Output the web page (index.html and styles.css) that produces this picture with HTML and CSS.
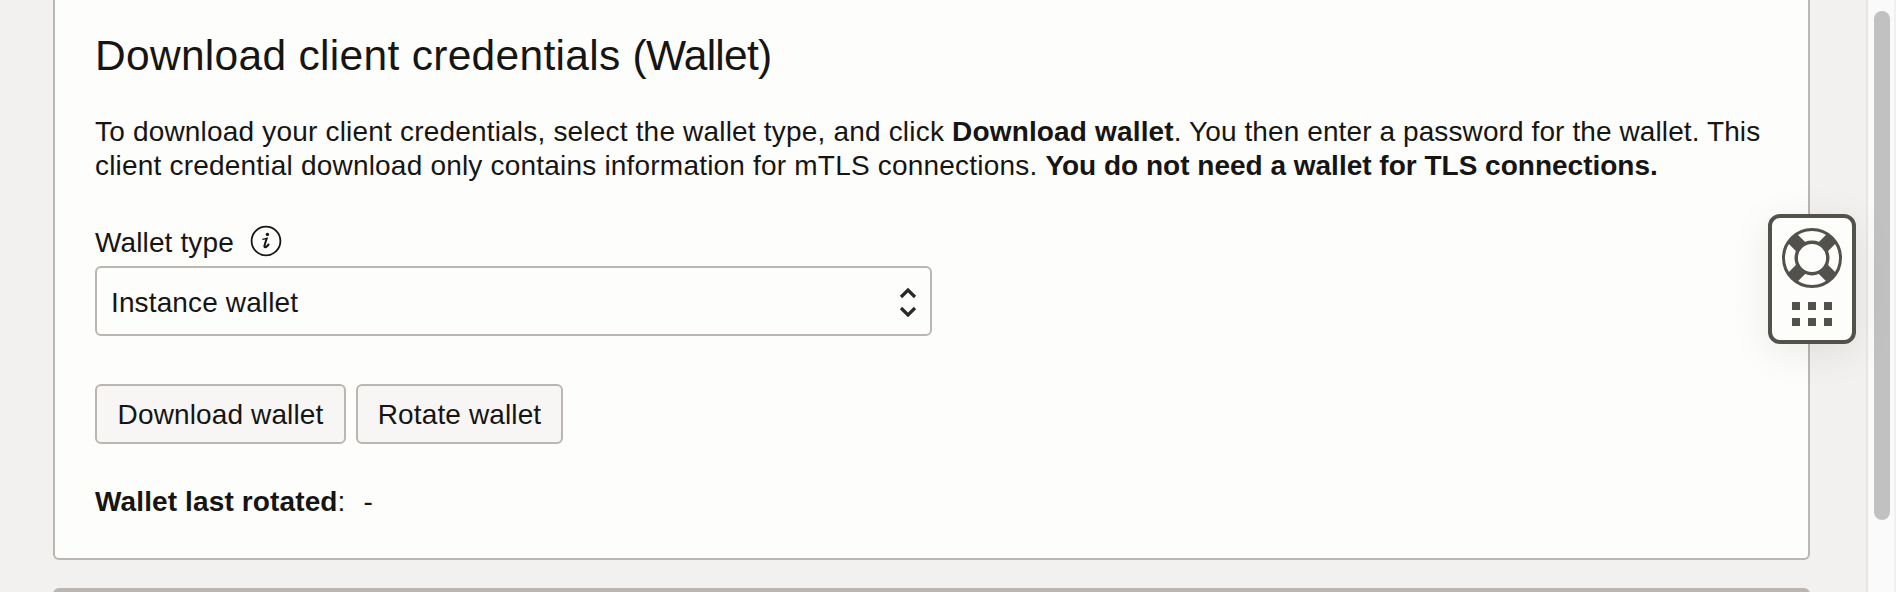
FILE: index.html
```html
<!DOCTYPE html>
<html lang="en">
<head>
<meta charset="utf-8">
<title>Database connection</title>
<link rel="stylesheet" href="styles.css">
</head>
<body>
<div class="page">
  <main class="content">
    <section class="card">
      <h2 class="title"><span class="t1">Download client credentials </span><span class="t2">(Wallet)</span></h2>
      <p class="intro"><span class="l1">To download your client credentials, select the wallet type, and click </span><b class="b1">Download wallet</b><span class="l2">. You then enter a password for the wallet. This</span><br><span class="l3">client credential download only contains information for mTLS connections. </span><b>You do not need a wallet for TLS connections.</b></p>
      <div class="field">
        <div class="label"><span class="lt">Wallet type</span>
          <svg class="info" viewBox="0 0 32 32"><circle cx="16" cy="16" r="14.4" fill="none" stroke="#161513" stroke-width="1.8"/><circle cx="17.4" cy="9.4" r="1.7" fill="#161513"/><path d="M12.3 14.4Q15 14 17.8 12.9" fill="none" stroke="#161513" stroke-width="1.3"/><path d="M16.7 13.2L14.5 20.4Q14 22.6 15.8 22Q17.6 21.1 19 18.9" fill="none" stroke="#161513" stroke-width="2"/></svg>
        </div>
        <div class="select"><span class="st">Instance wallet</span>
          <svg class="arrows" viewBox="0 0 18 30"><path d="M2 10L9 3L16 10M2 21L9 28L16 21" fill="none" stroke="#2b2a28" stroke-width="3.2"/></svg>
        </div>
      </div>
      <div class="actions">
        <button class="btn download"><span>Download wallet</span></button>
        <button class="btn rotate"><span>Rotate wallet</span></button>
      </div>
      <div class="rotated"><b>Wallet last rotated</b><span>:</span><span class="value">-</span></div>
    </section>
    <section class="next"></section>
  </main>
  <div class="track"><div class="thumb"></div></div>
  <aside class="help">
    <svg class="ring" viewBox="0 0 60 60">
      <path d="M10.5 10.5L22 22M49.5 10.5L38 22M10.5 49.5L22 38M49.5 49.5L38 38" stroke="#53514c" stroke-width="13" fill="none"/>
      <circle cx="30" cy="30" r="28.5" fill="none" stroke="#53514c" stroke-width="3"/>
      <circle cx="30" cy="30" r="15.8" fill="#fdfdfb" stroke="#53514c" stroke-width="3.4"/>
    </svg>
    <div class="dots"><i></i><i></i><i></i><i></i><i></i><i></i></div>
  </aside>
</div>
</body>
</html>
```
FILE: styles.css
```css
* { box-sizing: border-box; }
body { margin: 0; overflow: hidden; color: #161513; font: 28px/34px "Liberation Sans", Arial, sans-serif; background: #f3f1f0; }
.page { position: relative; display: flex; height: 592px; overflow: hidden; }
.content { width: 1866px; padding: 0 56px 0 53px; display: flex; flex-direction: column; gap: 28px; }
.card { width: 1757px; height: 560px; flex: none; padding: 31px 40px 0; border: 2px solid #bbb6b1; border-top: 0; border-radius: 0 0 6px 6px; background: #fdfdfb; }
.next { width: 1757px; height: 20px; flex: none; border-radius: 6px 6px 0 0; background: #bbb6b1; }
.title { margin: 0 0 34px; height: 50px; font-size: 42.5px; line-height: 50px; font-weight: 400; white-space: nowrap; }
.t1 { letter-spacing: .3px; }
.t2 { letter-spacing: -.75px; }
.intro { margin: 0; white-space: nowrap; }
.l1 { letter-spacing: .19px; }
.b1 { letter-spacing: .16px; }
.l2 { letter-spacing: .1px; }
.l3 { letter-spacing: .2px; }
.lt, .st, .rotated b, .btn { letter-spacing: .13px; }
.label { display: flex; align-items: center; height: 38px; margin-top: 41px; gap: 16px; }
.info { width: 32px; height: 32px; margin-top: -5px; }
.select { display: flex; align-items: center; justify-content: space-between; width: 837px; height: 70px; margin-top: 4px; padding: 2px 13px 0 14px; border: 2px solid #bbb6b1; border-radius: 6px; }
.st { padding-top: 2px; }
.arrows { width: 18px; height: 30px; }
.actions { display: flex; gap: 10px; margin-top: 48px; }
.btn { height: 60px; padding: 2px 0 0; border: 2px solid #bbb6b1; border-radius: 6px; background: #f7f6f5; color: inherit; font: inherit; letter-spacing: .13px; white-space: nowrap; }
.download { width: 251px; }
.rotate { width: 207px; }
.rotated { display: flex; margin-top: 41px; }
.value { margin-left: 18px; }
.track { width: 30px; flex: none; padding: 11px 0 0 6px; border-left: 2px solid #e7e7e7; border-right: 2px solid #f0f0f0; background: #fafafa; }
.thumb { width: 16px; height: 509px; border-radius: 8px; background: #c1c1c1; }
.help { position: absolute; left: 1768px; top: 214px; width: 88px; height: 130px; padding-top: 10px; border: 4px solid #53514c; border-radius: 12px; background: #fdfdfb; box-shadow: 0 8px 40px rgba(0,0,0,.08); display: flex; flex-direction: column; align-items: center; }
.ring { width: 60px; height: 60px; }
.dots { display: grid; grid-template-columns: repeat(3, 8px); gap: 8px; margin-top: 14px; }
.dots i { height: 8px; background: #53514c; }
```
